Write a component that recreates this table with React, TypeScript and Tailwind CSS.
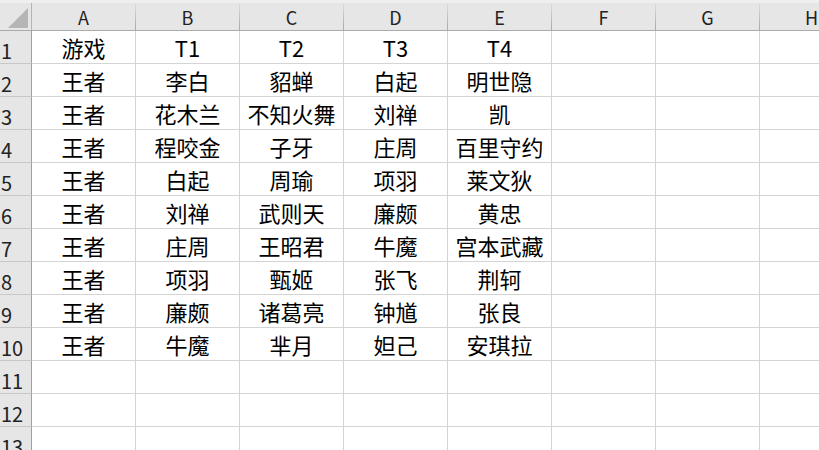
const columns = ["A", "B", "C", "D", "E", "F", "G", "H"];

const data: string[][] = [
  ["游戏", "T1", "T2", "T3", "T4"],
  ["王者", "李白", "貂蝉", "白起", "明世隐"],
  ["王者", "花木兰", "不知火舞", "刘禅", "凯"],
  ["王者", "程咬金", "子牙", "庄周", "百里守约"],
  ["王者", "白起", "周瑜", "项羽", "莱文狄"],
  ["王者", "刘禅", "武则天", "廉颇", "黄忠"],
  ["王者", "庄周", "王昭君", "牛魔", "宫本武藏"],
  ["王者", "项羽", "甄姬", "张飞", "荆轲"],
  ["王者", "廉颇", "诸葛亮", "钟馗", "张良"],
  ["王者", "牛魔", "芈月", "妲己", "安琪拉"],
  [],
  [],
  [],
];

const font = { fontFamily: '"Noto Sans CJK SC", "Noto Sans", sans-serif' };

const App = () => {
  return (
    <div
      className="w-[819px] h-[450px] overflow-hidden bg-white text-black"
      style={font}
    >
      {/* column header */}
      <div className="flex flex-col h-[31px] bg-[#e6e6e6] border-b border-[#ababab]">
        <div className="h-[3px] bg-[#efefef]" />
        <div className="flex flex-1">
          <div className="w-[32px] shrink-0 flex items-end justify-end pr-[3px] pb-[2px] border-r border-[#b4b4b4]">
            <svg width="20" height="20" viewBox="0 0 20 20">
              <polygon points="20,0 20,20 0,20" fill="#b5b5b5" />
            </svg>
          </div>
          {columns.map((c) => (
            <div key={c} className="flex w-[104px] shrink-0">
              <span className="flex-1 flex items-center justify-center text-[18px] leading-none text-[#222] pt-[1px]">
                {c}
              </span>
              <div className="w-px bg-linear-to-b from-[#dcdcdc] to-[#a9a9a9]" />
            </div>
          ))}
        </div>
      </div>

      {/* rows */}
      {data.map((row, r) => (
        <div key={r} className="flex h-[33px]">
          <div className="w-[32px] shrink-0 flex items-end pl-[1px] pb-[2px] bg-[#e6e6e6] border-r border-b border-r-[#a0a0a0] border-b-[#c8c8c8] text-[20px] leading-none text-[#222]">
            {r + 1}
          </div>
          {columns.map((c, i) => (
            <div
              key={c}
              className="w-[104px] shrink-0 flex items-center justify-center border-r border-b border-[#d4d4d4] text-[22px] leading-none pb-[1px]"
            >
              {row[i] ?? ""}
            </div>
          ))}
        </div>
      ))}
    </div>
  );
};

export default App;
